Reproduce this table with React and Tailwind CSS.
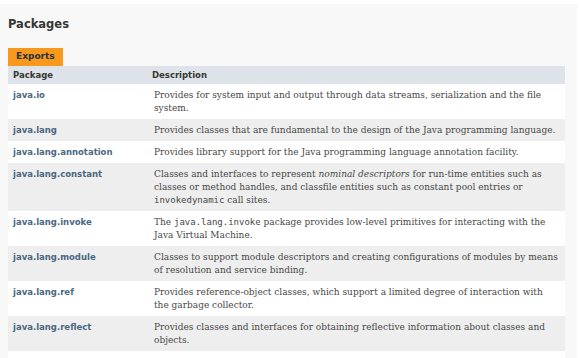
import React from 'react';

const code = (t) => <code className="font-['DejaVu_Sans_Mono',monospace] text-[9px]">{t}</code>;

const rows = [
  ['java.io', <>Provides for system input and output through data streams, serialization and the file system.</>],
  ['java.lang', <>Provides classes that are fundamental to the design of the Java programming language.</>],
  ['java.lang.annotation', <>Provides library support for the Java programming language annotation facility.</>],
  ['java.lang.constant', <>Classes and interfaces to represent <i>nominal descriptors</i> for run-time entities such as classes or method handles, and classfile entities such as constant pool entries or {code('invokedynamic')} call sites.</>],
  ['java.lang.invoke', <>The {code('java.lang.invoke')} package provides low-level primitives for interacting with the Java Virtual Machine.</>],
  ['java.lang.module', <>Classes to support module descriptors and creating configurations of modules by means of resolution and service binding.</>],
  ['java.lang.ref', <>Provides reference-object classes, which support a limited degree of interaction with the garbage collector.</>],
  ['java.lang.reflect', <>Provides classes and interfaces for obtaining reflective information about classes and objects.</>],
  ['java.lang.runtime', <>The {code('java.lang.runtime')} package provides low-level runtime support for the Java language.</>],
];

export default function App() {
  return (
    <div className="h-[358px] overflow-hidden bg-white pt-[4px]">
      <div className="w-[577px] bg-[#f8f8f8] pl-[8px] pr-[12px] pt-[12px] pb-4">
        <h2 className="font-['DejaVu_Sans',sans-serif] font-bold text-[11.5px] text-[#353833] leading-[16px] mb-[16px]">Packages</h2>
        <div className="flex">
          <div className="h-[18px] px-[8px] bg-[#f8981d] flex items-center font-['DejaVu_Sans',sans-serif] font-bold text-[9px] text-[#253441]">Exports</div>
        </div>
        <div className="bg-white">
          <div className="grid grid-cols-[139px_1fr] bg-[#dee3e9] h-[18px] items-center font-['DejaVu_Sans',sans-serif] font-bold text-[8.5px] text-[#353833]">
            <div className="pl-[5px]">Package</div>
            <div className="pl-[5px]">Description</div>
          </div>
          {rows.map(([name, desc], i) => (
            <div key={name} className={`grid grid-cols-[139px_1fr] ${i % 2 ? 'bg-[#eeeeee]' : 'bg-white'}`}>
              <div className="pl-[5px] pt-[5px] font-['DejaVu_Sans',sans-serif] font-bold text-[8.5px] leading-[12px] text-[#4a6782]">{name}</div>
              <div className="pl-[7px] pr-[7px] pt-[5px] pb-[4px] font-['DejaVu_Serif',serif] text-[9px] leading-[13px] text-[#474747]">{desc}</div>
            </div>
          ))}
        </div>
      </div>
    </div>
  );
}
